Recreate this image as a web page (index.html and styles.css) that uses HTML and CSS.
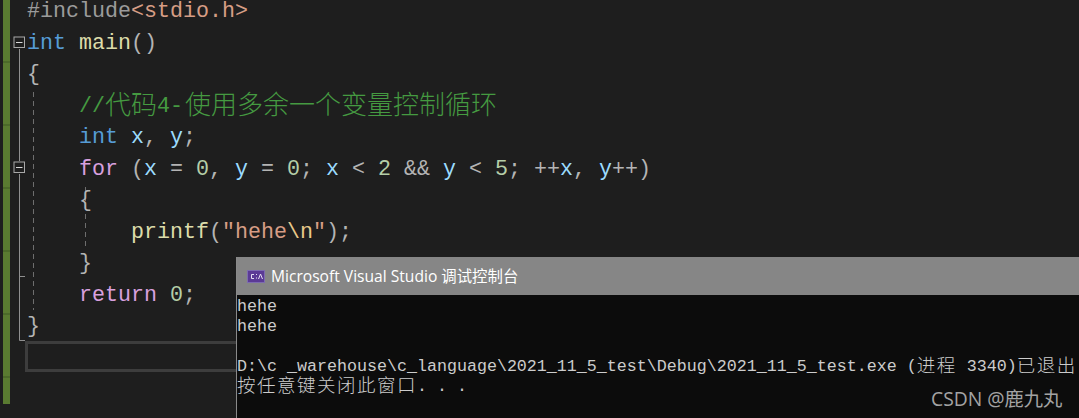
FILE: index.html
```html
<!DOCTYPE html>
<html lang="zh-CN">
<head>
<meta charset="utf-8">
<title>Microsoft Visual Studio</title>
<link rel="stylesheet" href="styles.css">
</head>
<body>
<main class="ide">
  <div class="change-bar"></div>
  <svg class="guides" width="236" height="418" viewBox="0 0 236 418" aria-hidden="true">
    <g fill="none" stroke="#8f8f8f" stroke-width="1">
      <path d="M19.5 49V161M19.5 174V340.5H25M19.5 276.5H25"/>
      <path d="M33.5 92V310M85.5 187V250" stroke="#6e6e6e" stroke-dasharray="5 4"/>
    </g>
    <g fill="#1e1e1e" stroke="#a8a8a8">
      <rect x="14" y="37" width="10.5" height="10.5"/>
      <rect x="14" y="162" width="10.5" height="10.5"/>
    </g>
    <path d="M16 42.5H22.5M16 167.5H22.5" stroke="#d8d8d8"/>
  </svg>
  <div class="code">
    <div class="line"><span class="pre">#include</span><span class="str">&lt;stdio.h&gt;</span></div>
    <div class="line"><span class="kw">int</span> <span class="fn">main</span><span class="op">()</span></div>
    <div class="line"><span class="op">{</span></div>
    <div class="line i1"><span class="cm">//<span class="cjk">代码</span>4-<span class="cjk cjk-run">使用多余一个变量控制循环</span></span></div>
    <div class="line i1"><span class="kw">int</span> <span class="var">x</span><span class="op">,</span> <span class="var">y</span><span class="op">;</span></div>
    <div class="line i1"><span class="ctl">for</span> <span class="op">(</span><span class="var">x</span> <span class="op">=</span> <span class="num">0</span><span class="op">,</span> <span class="var">y</span> <span class="op">=</span> <span class="num">0</span><span class="op">;</span> <span class="var">x</span> <span class="op">&lt;</span> <span class="num">2</span> <span class="op">&amp;&amp;</span> <span class="var">y</span> <span class="op">&lt;</span> <span class="num">5</span><span class="op">;</span> <span class="op">++</span><span class="var">x</span><span class="op">,</span> <span class="var">y</span><span class="op">++)</span></div>
    <div class="line i1"><span class="op">{</span></div>
    <div class="line i2"><span class="fn">printf</span><span class="op">(</span><span class="str">"hehe</span><span class="esc">\n</span><span class="str">"</span><span class="op">);</span></div>
    <div class="line i1"><span class="op">}</span></div>
    <div class="line i1"><span class="ctl">return</span> <span class="num">0</span><span class="op">;</span></div>
    <div class="line"><span class="op">}</span></div>
    <div class="current"></div>
  </div>
  <section class="console">
    <header class="console-title">
      <svg class="console-icon" width="18" height="13" viewBox="0 0 18 13" aria-hidden="true">
        <rect width="18" height="13" fill="#5b3a96"/>
        <rect x="0.5" y="0.5" width="17" height="12" fill="none" stroke="#7d6bb0"/>
        <path d="M7 4.5H4.5V8.5H7M9.5 4V5M9.5 7.5V8.5M11.5 9L13.5 4L15.5 9" fill="none" stroke="#e4def2" stroke-width="1"/>
      </svg>
      <span>Microsoft Visual Studio <span class="title-cjk">调试控制台</span></span>
    </header>
    <div class="console-body">
      <div class="out">hehe</div>
      <div class="out">hehe</div>
      <div class="out"></div>
      <div class="out">D:\c _warehouse\c_language\2021_11_5_test\Debug\2021_11_5_test.exe (<span class="ccjk">进程</span> 3340)<span class="ccjk">已退出</span></div>
      <div class="out"><span class="ccjk">按任意键关闭此窗口</span>. . .</div>
    </div>
  </section>
  <div class="watermark">CSDN @鹿九丸</div>
</main>
</body>
</html>
```
FILE: styles.css
```css
* { box-sizing: border-box; }
html, body { margin: 0; padding: 0; height: 100%; overflow: hidden; background: #1e1e1e; }
.ide { position: relative; width: 1079px; height: 418px; overflow: hidden; }
.change-bar {
  position: absolute; left: 3px; top: 0; width: 7px; height: 404px;
  background: repeating-linear-gradient(#5a7b31 0, #5a7b31 61.5px, #4c6a2a 61.5px, #4c6a2a 63px);
}
.guides { position: absolute; left: 0; top: 0; }
.code {
  position: relative; margin-top: -4px; padding-left: 27px;
  font-family: "Liberation Mono", monospace; font-size: 21.67px; color: #c8c8c8;
}
.line { height: 31.5px; line-height: 31.5px; white-space: pre; }
.i1 { padding-left: 52px; }
.i2 { padding-left: 104px; }
.cjk {
  font-family: "Noto Sans CJK SC", sans-serif; font-size: 26px; font-weight: 300;
  line-height: 0; vertical-align: -2px;
}
.cjk-run { padding-left: 2px; }
.pre { color: #9b9b9b; }
.str { color: #d69d85; }
.esc { color: #e8c98a; }
.kw { color: #569cd6; }
.fn { color: #dcdcaa; }
.op { color: #b4b4b4; }
.cm { color: #459a41; }
.var { color: #9cdcfe; }
.num { color: #b5cea8; }
.ctl { color: #d8a0df; }
.current {
  position: absolute; left: 25px; top: 345px; width: 230px; height: 31px;
  border: 3px solid #3d3d3d;
}
.console {
  position: absolute; left: 236px; top: 257px; width: 843px; height: 161px;
  background: #0c0c0c; border-left: 1px solid #8a8a8a;
}
.console-title {
  display: flex; align-items: center; gap: 6px; height: 38px; padding-left: 10px;
  background: #868686; color: #fff;
  font-family: "Open Sans", "Noto Sans CJK SC", sans-serif; font-size: 15.6px;
}
.console-icon { flex: none; }
.title-cjk { font-family: "Noto Sans CJK SC", sans-serif; font-size: 15.4px; line-height: 0; }
.console-body {
  padding-top: 2px;
  font-family: "Liberation Mono", monospace; font-size: 16.67px; color: #cccccc;
}
.out { height: 20px; line-height: 20px; white-space: pre; }
.ccjk { font-family: "Noto Sans CJK SC", sans-serif; font-size: 18.5px; letter-spacing: 1.5px; font-weight: 300; line-height: 0; vertical-align: -1px; }
.watermark {
  position: absolute; left: 931px; top: 386px;
  font-family: "Open Sans", "Noto Sans CJK SC", sans-serif; font-size: 19.3px; line-height: 26px;
  color: #a3a3a3;
}
```
